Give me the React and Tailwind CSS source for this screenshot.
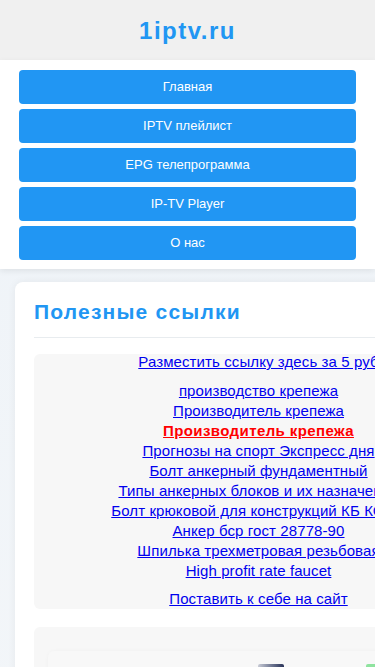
import React from 'react'

const menu = ['Главная', 'IPTV плейлист', 'EPG телепрограмма', 'IP-TV Player', 'О нас']

const links = [
  { t: 'производство крепежа' },
  { t: 'Производитель крепежа' },
  { t: 'Производитель крепежа', hot: true },
  { t: 'Прогнозы на спорт Экспресс дня' },
  { t: 'Болт анкерный фундаментный' },
  { t: 'Типы анкерных блоков и их назначение' },
  { t: 'Болт крюковой для конструкций КБ КС-10' },
  { t: 'Анкер бср гост 28778-90' },
  { t: 'Шпилька трехметровая резьбовая' },
  { t: 'High profit rate faucet' },
]

const App = () => {
  return (
    <div className="min-h-[667px] bg-gradient-to-b from-[#eef3f8] to-[#f3f6f9] font-['Liberation_Sans',Arial,sans-serif] overflow-hidden">
      <header className="h-[60px] bg-[#f0f0f0] flex items-center justify-center">
        <h1 className="text-[24px] font-bold text-[#2196f3] tracking-[1.5px] pt-[1px]">1iptv.ru</h1>
      </header>

      <nav className="bg-white shadow-[0_2px_6px_rgba(0,0,0,0.08)] px-[19px] pt-[10px] pb-[9px] flex flex-col gap-[5px]">
        {menu.map((m) => (
          <a key={m} href="#" className="h-[34px] bg-[#2196f3] rounded-[4px] text-white text-[13px] flex items-center justify-center">
            {m}
          </a>
        ))}
      </nav>

      <div className="pt-[13px] pl-[15px]">
        <div className="w-[487px] bg-white rounded-[8px] shadow-[0_0_8px_rgba(0,0,0,0.06)] px-[19px] pt-[18px]">
          <h2 className="text-[21px] leading-[24px] font-bold text-[#2196f3] tracking-[1.2px] pb-[13px] border-b border-[#e8ecef]">
            Полезные ссылки
          </h2>

          <div className="mt-[16px] bg-[#f7f7f7] rounded-[6px] flex flex-col items-center text-[15px] leading-[20px] tracking-[0.1px]">
            <a href="#" className="text-[#0000ee] underline leading-[16px] mb-[11px]">Разместить ссылку здесь за 5 руб</a>
            {links.map((l, i) =>
              l.hot ? (
                <a key={i} href="#" className="text-[#ff0000] font-bold underline tracking-[0.4px]">{l.t}</a>
              ) : (
                <a key={i} href="#" className="text-[#0000ee] underline">{l.t}</a>
              )
            )}
            <a href="#" className="text-[#0000ee] underline mt-[8px]">Поставить к себе на сайт</a>
          </div>

          <div className="mt-[18px] bg-[#f7f7f7] rounded-[6px] h-[120px] px-[14px] pt-[24px]">
            <div className="h-[90px] rounded-[6px] bg-[#f8f8f8] shadow-[0_0_4px_rgba(0,0,0,0.03)] relative">
              <div className="absolute left-[210px] top-[13px] w-[26px] h-[20px] bg-gradient-to-r from-[#c9ccd6] to-[#2a3358] rounded-t-[2px]"></div>
              <div className="absolute left-[318px] top-[13px] w-[12px] h-[20px] bg-[#8fe39f] rounded-t-[2px]"></div>
            </div>
          </div>
        </div>
      </div>
    </div>
  )
}

export default App
